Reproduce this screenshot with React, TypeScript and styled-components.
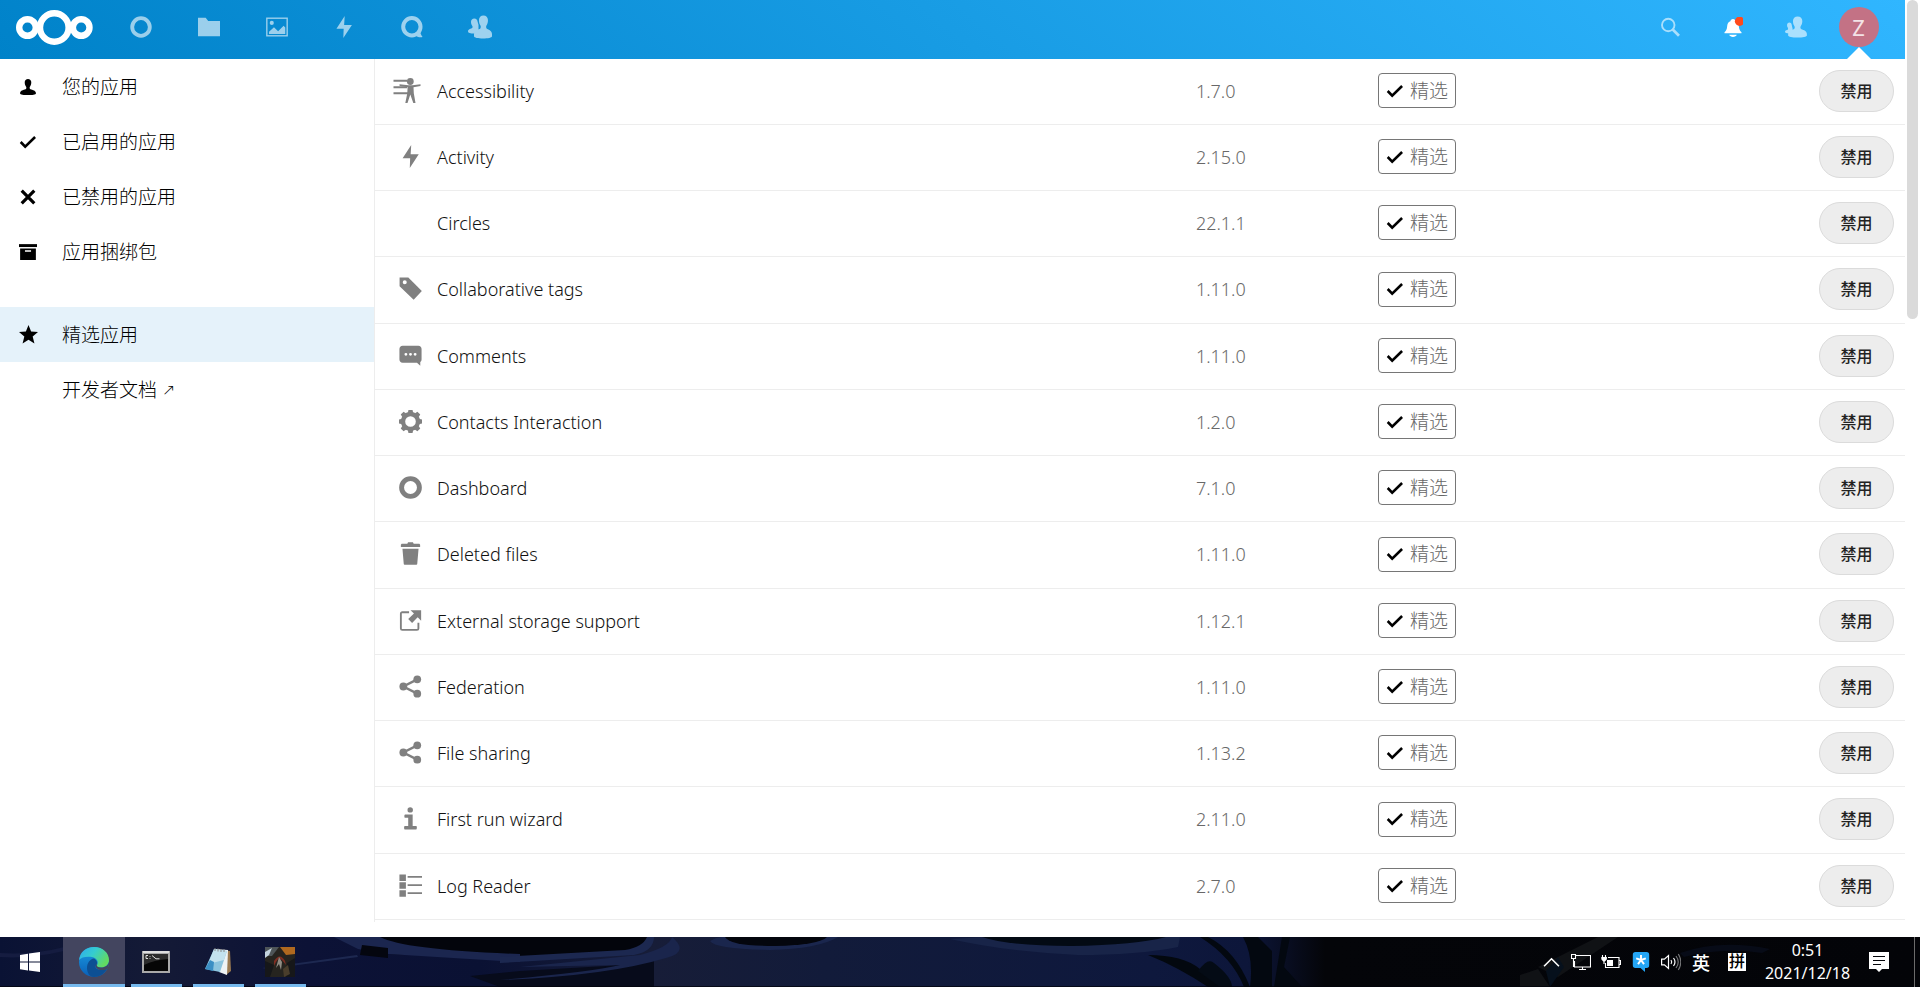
import React from "react";
import styled, { createGlobalStyle } from "styled-components";

const GlobalStyle = createGlobalStyle`
  *, *::before, *::after { box-sizing: border-box; }
  body {
    margin: 0;
    background: #fff;
    color: #111;
    font-family: "Noto Sans", "Noto Sans CJK SC", sans-serif;
    font-size: 18px;
    font-weight: 350;
  }
  a { color: inherit; text-decoration: none; }
  button { font: inherit; color: inherit; cursor: pointer; }
  svg { display: block; }
`;

const Screen = styled.div`
  display: flex;
  flex-direction: column;
  height: 100vh;
  overflow: hidden;
`;

const Browser = styled.div`
  display: flex;
  flex: 1;
  min-height: 0;
`;

const Page = styled.div`
  display: flex;
  flex: 1;
  flex-direction: column;
  min-width: 0;
  padding-bottom: 15px;
`;

const ScrollTrack = styled.div`
  flex: none;
  width: 15px;
  padding: 0 2px;
`;

const ScrollThumb = styled.div`
  height: 34%;
  border-radius: 6px;
  background: #dadada;
`;

/* ---------- header ---------- */

const Header = styled.header`
  display: flex;
  flex: none;
  align-items: center;
  height: 59px;
  padding: 0 15px;
  background: linear-gradient(40deg, #0082c9 0%, #30b6ff 100%);
  color: #fff;
`;

const Logo = styled.a`
  flex: none;
  width: 92px;
  padding-bottom: 2px;
`;

const AppMenu = styled.nav`
  display: grid;
  grid-template-columns: repeat(6, 1fr);
  width: 407px;
  height: 100%;
`;

const HeaderActions = styled.div`
  display: flex;
  height: 100%;
  margin-left: auto;
`;

const headerEntry = `
  display: flex;
  align-items: center;
  justify-content: center;
  height: 100%;
  padding: 0 0 5px;
`;

const AppLink = styled.a`
  ${headerEntry}
  svg { opacity: 0.6; }
`;

const HeaderButton = styled.button<{ $active?: boolean }>`
  ${headerEntry}
  position: relative;
  width: 63px;
  border: 0;
  background: none;
  color: #fff;
  > svg { opacity: ${(p) => (p.$active ? 1 : 0.6)}; }
`;

const Avatar = styled.span`
  width: 40px;
  height: 40px;
  border-radius: 50%;
  background: #c37285;
  color: #f3e3e7;
  font-size: 22px;
  font-weight: 400;
  line-height: 40px;
  text-align: center;
`;

const MenuArrow = styled.span`
  position: absolute;
  bottom: 0;
  left: 50%;
  margin-left: -12px;
  border: 12px solid transparent;
  border-top-width: 0;
  border-bottom-color: #fff;
`;

/* ---------- content ---------- */

const Content = styled.div`
  display: flex;
  flex: 1;
  min-height: 0;
`;

const Sidebar = styled.nav`
  flex: none;
  width: 375px;
  border-right: 1px solid #ededed;
`;

const SideList = styled.ul`
  margin: 0 0 28px;
  padding: 0;
  list-style: none;
`;

const SideLink = styled.a<{ $active?: boolean }>`
  display: flex;
  align-items: center;
  height: 55px;
  background: ${(p) => (p.$active ? "#e5f2fa" : "none")};
  color: #000;
  font-size: 19px;
  font-weight: 300;
  line-height: 24px;
`;

const SideIcon = styled.span`
  display: flex;
  flex: none;
  justify-content: center;
  width: 62px;
  padding-right: 6px;
  color: #000;
`;

const OutArrow = styled.span`
  padding-left: 5px;
  font-family: "DejaVu Sans", sans-serif;
  font-size: 16px;
`;

const Main = styled.main`
  flex: 1;
  min-width: 0;
  overflow: hidden;
`;

const AppTable = styled.table`
  width: 100%;
  border-spacing: 0;
  table-layout: fixed;
`;

const IconCol = styled.col`
  width: 62px;
`;

const NameCol = styled.col`
  width: 49.6%;
`;

const VersionCol = styled.col`
  width: 11.9%;
`;

const AppRow = styled.tr`
  height: 66px;
  &:nth-child(4n) { height: 67px; }
`;

const Cell = styled.td`
  padding: 0 0 2px;
  border-bottom: 1px solid #ededed;
  line-height: 24px;
  vertical-align: middle;
`;

const IconCell = styled(Cell)`
  padding: 0 0 3px 9px;
  color: #808080;
  svg { margin: 0 auto; }
`;

const VersionCell = styled(Cell)`
  color: #686868;
`;

const ActionCell = styled(Cell)`
  padding-right: 11px;
  text-align: right;
`;

const Badge = styled.span`
  display: inline-flex;
  align-items: center;
  gap: 6px;
  height: 35px;
  padding: 0 7px;
  border: 1px solid #767676;
  border-radius: 4px;
  color: #666;
  font-size: 19px;
  font-weight: 300;
  vertical-align: middle;
  svg { color: #000; }
`;

const DisableButton = styled.button`
  width: 75px;
  height: 42px;
  padding: 0;
  border: 1px solid #dbdbdb;
  border-radius: 21px;
  background: #ededed;
  color: #222;
  font-size: 16px;
  font-weight: 500;
  vertical-align: middle;
`;

/* ---------- taskbar ---------- */

const Taskbar = styled.footer`
  position: relative;
  display: flex;
  flex: none;
  height: 50px;
  overflow: hidden;
  background: #04050b;
  color: #fff;
`;

const Wallpaper = styled.svg`
  position: absolute;
  inset: 0;
  width: 100%;
  height: 100%;
`;

const TaskGroup = styled.div`
  position: relative;
  display: flex;
  height: 100%;
`;

const TrayGroup = styled(TaskGroup)`
  margin-left: auto;
`;

const taskButton = `
  display: flex;
  align-items: center;
  justify-content: center;
  height: 100%;
  padding: 0;
  border: 0;
  background: none;
  color: #fff;
`;

const StartButton = styled.button`
  ${taskButton}
  width: 63px;
  padding-right: 3px;
`;

const TaskButton = styled.button<{ $active?: boolean }>`
  ${taskButton}
  width: 62px;
  ${(p) => (p.$active ? "background: #43455f;" : "")}
  background-image: linear-gradient(#76b9ed, #76b9ed);
  background-repeat: no-repeat;
  background-position: bottom;
  background-size: ${(p) => (p.$active ? 62 : 51)}px 3px;
`;

const TrayButton = styled.button`
  ${taskButton}
  width: 30px;
`;

const ImeButton = styled.button`
  ${taskButton}
  width: 30px;
  margin-right: 6px;
  font-size: 18px;
  font-weight: 500;
`;

const PinyinTile = styled.span`
  width: 18px;
  height: 18px;
  background: #fff;
  color: #000;
  font-size: 16px;
  line-height: 17px;
`;

const Clock = styled.time`
  width: 101px;
  padding: 2px 2px 0 0;
  font-size: 16px;
  font-weight: 400;
  line-height: 23px;
  text-align: center;
`;

const NoticeButton = styled.button`
  ${taskButton}
  width: 56px;
  margin-right: 5px;
  padding-right: 16px;
  border-right: 1px solid #6b6b6b;
`;

/* ---------- drawings ---------- */

const USER =
  "M8 .8C6.3.8 5.1 2 5.1 3.6c0 1.5.2 2.4.8 3.5.3.5.6.7.6 1.200.1.7 0 1-.3 1.500C5.600 10.500 1 10.700 1 13.200v.8c0 .8 3.200 1.200 7 1.200s7-.4 7-1.200v-.8c0-2.500-4.600-2.700-5.200-3.400-.3-.5-.4-.8-.3-1.500 0-.5.300-.7.6-1.200.600-1.100.8-2 .8-3.500C10.900 2 9.700.8 8 .8z";

type Art = { box?: string; body: React.ReactNode };

const art: Record<string, Art> = {
  ring: { body: <circle cx="8" cy="8" r="6.200" fill="none" stroke="currentColor" strokeWidth="3.400" /> },
  ringThin: { body: <circle cx="8" cy="8" r="6.400" fill="none" stroke="currentColor" strokeWidth="2.800" /> },
  folder: { body: <path d="M0 1.200h5.600L7.400 3.600H16V14.800H0z" /> },
  picture: {
    body: (
      <>
        <rect x=".6" y="1.600" width="14.800" height="12.800" fill="none" stroke="currentColor" strokeWidth="1" />
        <circle cx="4.200" cy="5" r="1.500" />
        <path d="M2.200 13v-1.600L5.800 8.200l3 2.800 4-4 1.200 1.400V13z" />
      </>
    ),
  },
  bolt: { box: "0 0 32 32", body: <path d="M17 0 5 18.500h10.500L15 32 27.500 13H16.200z" /> },
  talk: {
    body: (
      <>
        <circle cx="7.900" cy="7.800" r="6.300" fill="none" stroke="currentColor" strokeWidth="2.900" />
        <path d="M10 13.800l3.800-3c.2 2.200 1 3.300 1.900 4.500-1.900.6-3.900 0-5.700-1.500z" />
      </>
    ),
  },
  contacts: {
    body: (
      <>
        <path d="M4.200 2.300C2.900 2.300 2 3.200 2 4.500c0 1.300.3 2 .8 2.700.3.500.3 1.100 0 1.500C2.200 9.300 0 9.200 0 11c0 .9 1.500 1.400 4 1.400L7 10V6.500L6.400 4.500C6.400 3.200 5.500 2.300 4.200 2.300z" />
        <path d="M10.300.3C8.500.3 7.300 1.500 7.300 3.400c0 1.600.3 2.600.9 3.500.4.600.4 1.500 0 2.100C7.300 9.800 4 10.200 4 12.700v1.400c0 .9 2.700 1.500 6 1.500s6-.6 6-1.500v-1.400c0-2.500-2.700-2.900-3.600-3.700-.4-.6-.4-1.500 0-2.100.6-.9.9-1.900.9-3.500C13.300 1.500 12.100.3 10.300.3z" />
      </>
    ),
  },
  contactsMenu: {
    body: (
      <>
        <path d="M3.200 4.800C2.200 4.800 1.500 5.500 1.500 6.500c0 1 .3 1.500.6 2 .2.500.2.900 0 1.300C1.600 10.300 0 10.300 0 11.500c0 .8 1.200 1.200 3 1.200L5.500 11V9L4.900 6.500C4.900 5.500 4.200 4.800 3.200 4.800z" />
        <path d="M9.200.3C7.100.3 5.800 1.600 5.800 3.600c0 1.700.4 2.700 1 3.600.4.600.4 1.400 0 2C5.900 10 2.300 10.300 2.300 12.900v1.200c0 .9 3 1.500 6.800 1.500s6.800-.6 6.800-1.500v-1.200c0-2.600-3.500-2.900-4.400-3.700-.4-.6-.4-1.400 0-2 .6-.9 1.100-1.900 1.100-3.600C12.600 1.600 11.300.3 9.200.3z" />
      </>
    ),
  },
  search: {
    body: (
      <g fill="none" stroke="currentColor">
        <circle cx="6.600" cy="6.400" r="5" strokeWidth="1.500" />
        <path d="M10.200 10l5 5" strokeWidth="2.200" />
      </g>
    ),
  },
  bell: {
    body: (
      <>
        <path d="M8 1.500C6.800 1.500 6 2.400 5.900 3.300 4 4 3.500 5.500 3.300 7.500 3.100 9.500 2.800 10.500 1.200 12.200V13h13.600v-.8C13.200 10.500 12.900 9.500 12.700 7.500 12.500 5.500 12 4 10.100 3.300 10 2.400 9.200 1.500 8 1.500zM5 14.200h6c-.3 1-1.500 1.800-3 1.800s-2.700-.8-3-1.800z" />
        <circle cx="13.300" cy="3.400" r="3.800" fill="#ff4a1c" />
      </>
    ),
  },
  user: { body: <path d={USER} /> },
  check: { body: <path d="M1.500 8l4 4.100L14.300 3.600" fill="none" stroke="currentColor" strokeWidth="2.300" /> },
  cross: { body: <path d="M1.700 1.700l12.600 12.600M14.300 1.700L1.700 14.300" fill="none" stroke="currentColor" strokeWidth="3.200" /> },
  archive: {
    body: (
      <>
        <path d="M0 1h16v2.600H0z" />
        <path fillRule="evenodd" d="M1 4.800h14V15H1zM5.300 6.500v1.300h5.400V6.500z" />
      </>
    ),
  },
  star: { body: <path d="M8 0l2.200 5.500 5.800.4-4.500 3.800 1.500 5.900L8 12.400l-5 3.200 1.500-5.900L0 5.900l5.800-.4z" /> },
  accessibility: {
    box: "0 0 28 25",
    body: (
      <>
        <path d="M.5 1.800H14v2H.5zM.5 8.300H14v2H.5zM.5 14.300H16v2H.5z" />
        <circle cx="17.300" cy="3.500" r="3.400" />
        <path d="M6.500 6.300l9 1h4l8-1v1.600l-7 1.400.3 6L22.500 25h-2.200l-3-8.500L14.500 25h-2.200l2-9.700.3-6-8-1.400z" />
      </>
    ),
  },
  tag: { body: <path fillRule="evenodd" d="M.4.3H6.500L15.900 9.700 10.200 15.900.4 6.500zM4 2.300a1.400 1.400 0 1 0 0 2.800 1.400 1.400 0 0 0 0-2.800z" /> },
  comment: {
    body: (
      <path
        fillRule="evenodd"
        d="M2.500 1.200h11c1.300 0 2.200.9 2.200 2.200v7.200c0 .9-.3 1.500-.9 1.900v2.700L12.500 13h-10C1.200 13 .3 12 .3 10.700V3.400C.3 2.100 1.200 1.200 2.500 1.200zM4.800 6.200a1 1 0 1 0 0 2 1 1 0 0 0 0-2zM8 6.200a1 1 0 1 0 0 2 1 1 0 0 0 0-2zM11.200 6.200a1 1 0 1 0 0 2 1 1 0 0 0 0-2z"
      />
    ),
  },
  gear: {
    body: (
      <>
        <circle cx="8" cy="8" r="5.200" fill="none" stroke="currentColor" strokeWidth="3" />
        <g>
          {[0, 45, 90, 135, 180, 225, 270, 315].map((a) => (
            <path key={a} d="M6.600-.2h2.800l.5 2.500H6.100z" transform={`rotate(${a} 8 8)`} />
          ))}
        </g>
      </>
    ),
  },
  trash: {
    body: (
      <>
        <path d="M6.300.2h3.400l.5 1h3.600c.5 0 .9.4.9.900V3.500H1.300V2.100c0-.5.4-.9.900-.9h3.600z" />
        <path d="M2.400 4.700h11.200L12.700 15.200c0 .4-.4.7-.8.7H4.100c-.4 0-.8-.3-.8-.7z" />
      </>
    ),
  },
  external: {
    body: (
      <>
        <path d="M7 2.300H2.300c-.6 0-1 .4-1 1v10.200c0 .6.4 1 1 1h10.200c.6 0 1-.4 1-1V9.500" fill="none" stroke="currentColor" strokeWidth="1.300" />
        <path d="M8 .8h7.400v7.400L13 5.800 9.100 9.700 6.400 7 10.400 3.200z" />
      </>
    ),
  },
  share: {
    body: (
      <>
        <path d="M12.700 3L3 8l9.700 5" fill="none" stroke="currentColor" strokeWidth="1.700" />
        <circle cx="3" cy="8" r="2.700" />
        <circle cx="12.700" cy="3" r="2.700" />
        <circle cx="12.700" cy="13" r="2.700" />
      </>
    ),
  },
  info: {
    body: (
      <>
        <circle cx="7.800" cy="2" r="1.900" />
        <path d="M4.200 5.200h5.300v8.100H12c.6 0 .6 2.300 0 2.300H4c-.6 0-.6-2.300 0-2.300h2.400V7.500H4.200c-.6 0-.6-2.300 0-2.300z" />
      </>
    ),
  },
  list: {
    body: (
      <path d="M.3.3h4.500v4.500H.3zM.3 5.800h4.500v4.400H.3zM.3 11.300h4.500v4.500H.3zM6 1.400h10v1.200H6zM6 7.100h10v1.200H6zM6 12.700h10v1.200H6z" />
    ),
  },
  start: { body: <path d="M0 2.300L6.400 1.300V7.600H0zM7.200 1.200L16 0V7.600H7.200zM0 8.300H6.400V14.700L0 13.800zM7.200 8.300H16V16L7.200 14.800z" /> },
  chevron: { body: <path d="M1 11.500l7-7 7 7" fill="none" stroke="currentColor" strokeWidth="1.500" /> },
  monitor: {
    box: "0 0 20 20",
    body: (
      <path d="M5 3.500h14.500v11.500H3.500V9M.5 2.500h4v4h-4zM2.500 6.500V15M11.500 15v2.500M8 17.500h7" fill="none" stroke="currentColor" strokeWidth="1.100" />
    ),
  },
  battery: {
    box: "0 0 20 20",
    body: (
      <>
        <path d="M7 5.500h11v10H4.500V11M18.500 8.500h1v4h-1M1.500 3v2.500M4.500 3v2.500M3 9v3" fill="none" stroke="currentColor" strokeWidth="1.100" />
        <path d="M.3 5h5.600v2.200L4 9.500H2.200L.3 7.200zM6 8h6v6H6z" />
      </>
    ),
  },
  bubbleStar: {
    box: "0 0 20 20",
    body: (
      <>
        <path d="M4.500 0h11C17.400 0 18.200.8 18.200 2.700v10.600c0 1.900-.8 2.700-2.700 2.700H14v4l-4.500-4h-5c-1.900 0-2.700-.8-2.700-2.700V2.700C1.800.8 2.600 0 4.500 0z" fill="#24a6f5" />
        <path d="M10 8V3M10 8L5.200 6.400M10 8l4.800-1.600M10 8l-3 4.100M10 8l3 4.100" stroke="#fff" strokeWidth="2" />
      </>
    ),
  },
  speaker: {
    box: "0 0 20 20",
    body: (
      <g fill="none" stroke="currentColor" strokeWidth="1.200">
        <path d="M.6 7.200h2.800L7.500 3.500v13L3.400 12.800H.6z" />
        <path d="M10 8q1.500 2 0 4M12.500 6q3 4 0 8" />
        <path d="M15 4q4.500 6 0 12M17.300 2q5 8 0 16" opacity=".45" />
      </g>
    ),
  },
  notice: {
    box: "0 0 20 20",
    body: (
      <>
        <path d="M0 0h20v17h-7l-3 3-3-3H0z" />
        <path d="M4 4.500h12M4 8.500h12M4 12.500h8" stroke="#05060b" strokeWidth="1.200" />
      </>
    ),
  },
};

const Icon = ({ name, size = 22, height }: { name: string; size?: number; height?: number }) => (
  <svg width={size} height={height ?? size} viewBox={art[name].box ?? "0 0 16 16"} fill="currentColor" aria-hidden="true">
    {art[name].body}
  </svg>
);

const NextcloudLogo = () => (
  <svg width="79" height="37" viewBox="0 0 79 37" fill="none" stroke="#fff" aria-hidden="true">
    <circle cx="39.300" cy="17.500" r="14.300" strokeWidth="6.400" />
    <circle cx="12.500" cy="17.500" r="8.300" strokeWidth="6.400" />
    <circle cx="66.200" cy="17.500" r="8.300" strokeWidth="6.400" />
  </svg>
);

const EdgeIcon = () => (
  <svg width="30" height="30" viewBox="0 0 30 30" aria-hidden="true">
    <defs>
      <linearGradient id="edgeTop" x1="0" y1="0" x2="1" y2="0.500">
        <stop offset="0" stopColor="#2fa8f0" />
        <stop offset=".5" stopColor="#35ccd0" />
        <stop offset="1" stopColor="#62d962" />
      </linearGradient>
      <linearGradient id="edgeSide" x1="0" y1="0" x2="0" y2="1">
        <stop offset="0" stopColor="#1b9de2" />
        <stop offset="1" stopColor="#0a5fb8" />
      </linearGradient>
    </defs>
    <circle cx="15" cy="15" r="15" fill="url(#edgeSide)" />
    <path d="M0 13C1 5 7 0 15 0c9 0 15 6 15 13 0 5-4 7.500-8 7.500-3 0-4.500-1-4-2.300C20 15 18 11 13 10 8 9 2 10 0 13z" fill="url(#edgeTop)" />
    <path d="M8 21c0-5 3-9 7-9.500 2 1 3.500 3 3 5-.5 1-1.500 2-1.500 3.500 0 2.500 5 4 11.500 2-3 5-8 8-13 8-4 0-7-4-7-9z" fill="#0d4f93" />
    <path d="M17.500 16c-2 3-.5 6.500 4 7 3 .3 5-.2 7.200-1.200L30 17v-2c-1 4-4.500 5.500-8 5.500-3.500 0-5-1.500-4.500-4.500z" fill="#43455f" />
  </svg>
);

const TerminalIcon = () => (
  <svg width="30" height="24" viewBox="0 0 30 24" aria-hidden="true">
    <rect x="1" y="1" width="28" height="22" fill="#a9a9a9" />
    <rect x="2" y="1" width="26" height="2" fill="#dedede" />
    <rect x="3" y="4" width="24" height="17" fill="#060606" />
    <path d="M3 4h24v5q-14 1-24 6z" fill="#2c2c2c" />
    <path d="M7 5.500H5v3h2M9 6v.8M9 8v.8M11 5.500l4 3.300h3.500" fill="none" stroke="#ddd" strokeWidth="1" />
  </svg>
);

const NotepadIcon = () => (
  <svg width="30" height="30" viewBox="0 0 30 30" aria-hidden="true">
    <path d="M12 2l15 2 1 20-5 4z" fill="#9a7a52" />
    <path d="M11 2l14 1-1 25-8-3z" fill="#eef3f5" />
    <path d="M11 2l13 2-7 21-15-3z" fill="#8cc4de" />
    <path d="M11 2l13 2-3 9L5 17z" fill="#c3e2ee" />
    <path d="M2 22l5-9 4 2-1 9z" fill="#3b8fc4" />
    <path d="M12 1v3M15 1.500v3M18 2v3M21 2v3" stroke="#888" />
  </svg>
);

const GameIcon = () => (
  <svg width="30" height="30" viewBox="0 0 30 30" aria-hidden="true">
    <rect width="30" height="30" fill="#26241f" />
    <path d="M15 0h15v7l-9 1z" fill="#b0691f" />
    <path d="M0 0h14L7 9H0z" fill="#4e5558" />
    <path d="M0 5l7-4-3 7-4 3z" fill="#c4d4de" />
    <path d="M9 14q6-9 11 0l1 4-4-5-3-2-3 4-2 4z" fill="#7d2d22" />
    <path d="M14 10l3 5-1 8-2-6-3 4z" fill="#918c84" />
    <path d="M0 14l9 4-4 12H0zM22 16l8-5v19h-9z" fill="#161719" />
    <path d="M18 22l5-4 2 9-6 3z" fill="#4a3e2c" />
  </svg>
);

const TaskbarBackdrop = () => (
  <Wallpaper viewBox="0 0 1920 50" preserveAspectRatio="none" aria-hidden="true">
    <defs>
      <linearGradient id="night" gradientUnits="userSpaceOnUse" x1="0" y1="0" x2="1920" y2="0">
        <stop offset="0" stopColor="#0a1234" />
        <stop offset=".08" stopColor="#141a36" />
        <stop offset=".16" stopColor="#0c1236" />
        <stop offset=".25" stopColor="#0a1133" />
        <stop offset=".34" stopColor="#171d38" />
        <stop offset=".43" stopColor="#121b3a" />
        <stop offset=".6" stopColor="#0e183d" />
        <stop offset=".65" stopColor="#0d163a" />
        <stop offset=".69" stopColor="#040509" />
        <stop offset="1" stopColor="#030408" />
      </linearGradient>
    </defs>
    <rect width="1920" height="50" fill="url(#night)" />
    <path d="M0 16q35 2 64-6v4Q30 22 0 20z" fill="#151c40" />
    <path d="M470 39l50-5 120-7 14-5v28H500z" fill="#070b1b" />
    <path d="M262 31l95-13 1 2-90 12z" fill="#1d2850" />
    <path d="M372 0h278l-8 14-120 8-134-5z" fill="#03050c" />
    <path d="M334 0h46q25 13 140 17v8l-132-8-30-5z" fill="#1b264f" />
    <path d="M362 8l26 3v10l-28-3z" fill="#04060f" />
    <path d="M500 20l125-7q18-3 22-13h7q0 14-20 18l-134 8z" fill="#1c2850" />
    <path d="M520 30l120-12q30-8 32-18 18 15-6 21-60 18-166 22 90-8 120-15z" fill="#1a254c" />
    <path d="M710 4q8-5 18-4h110q-20 12-68 13-55-1-60-9z" fill="#1a264d" />
    <path d="M725 0h102q-8 8-52 9-45 0-50-9z" fill="#04060d" />
    <path d="M950 2l35-2h195l-2 10q-40 8-100 8-70-3-128-16z" fill="#182448" />
    <path d="M982 0h184q-30 8-95 9-62 0-89-9z" fill="#030a14" />
    <path d="M1148 18q35 0 52 14l14 12 16 6h-22q-30-20-60-32z" fill="#03080f" />
    <path d="M1200 0h8q28 14 42 50h-6q-12-30-44-50zM1243 0h15l14 14v36h-22q4-30-7-50zM1282 0h8l-6 30 18 20h-28z" fill="#030810" />
    <path d="M1198 34q10-14 16-8 18 14 18 24h-12z" fill="#040b15" />
    <path d="M1538 30l60-30h20l-60 40zM1520 38l18-6 12 18h-30z" fill="#101215" />
    <path d="M1546 34l12-14 6 10-14 20z" fill="#06101c" />
    <path d="M1680 16q40-14 90-4l-8 4q-40-6-78 4z" fill="#070b17" />
    <rect y="49" width="1920" height="1" fill="#02030a" opacity=".7" />
  </Wallpaper>
);

/* ---------- data ---------- */

const menuApps = [
  ["ringThin", "仪表盘"],
  ["folder", "文件"],
  ["picture", "照片"],
  ["bolt", "动态"],
  ["talk", "通话"],
  ["contacts", "联系人"],
];

const sections = [
  { icon: "user", label: "您的应用" },
  { icon: "check", label: "已启用的应用" },
  { icon: "cross", label: "已禁用的应用" },
  { icon: "archive", label: "应用捆绑包" },
];

const apps = [
  { name: "Accessibility", version: "1.7.0", icon: "accessibility" },
  { name: "Activity", version: "2.15.0", icon: "bolt" },
  { name: "Circles", version: "22.1.1", icon: "" },
  { name: "Collaborative tags", version: "1.11.0", icon: "tag" },
  { name: "Comments", version: "1.11.0", icon: "comment" },
  { name: "Contacts Interaction", version: "1.2.0", icon: "gear" },
  { name: "Dashboard", version: "7.1.0", icon: "ring" },
  { name: "Deleted files", version: "1.11.0", icon: "trash" },
  { name: "External storage support", version: "1.12.1", icon: "external" },
  { name: "Federation", version: "1.11.0", icon: "share" },
  { name: "File sharing", version: "1.13.2", icon: "share" },
  { name: "First run wizard", version: "2.11.0", icon: "info" },
  { name: "Log Reader", version: "2.7.0", icon: "list" },
];

/* The accessibility drawing is wider to the left, so its box carries blank space on the right. */
const WideIcon = styled.span`
  display: block;
  padding-right: 7px;
`;

const AppIcon = ({ name }: { name: string }) => {
  if (!name) return null;
  return name === "accessibility" ? (
    <WideIcon>
      <Icon name={name} size={28} height={25} />
    </WideIcon>
  ) : (
    <Icon name={name} size={23} />
  );
};

export default function App() {
  return (
    <Screen>
      <GlobalStyle />
      <Browser>
        <Page>
          <Header>
            <Logo href="#" aria-label="Nextcloud">
              <NextcloudLogo />
            </Logo>
            <AppMenu>
              {menuApps.map(([icon, label]) => (
                <AppLink key={icon} href="#" aria-label={label}>
                  <Icon name={icon} size={icon === "contacts" ? 24 : 22} />
                </AppLink>
              ))}
            </AppMenu>
            <HeaderActions>
              <HeaderButton aria-label="搜索">
                <Icon name="search" size={20} />
              </HeaderButton>
              <HeaderButton aria-label="通知" $active>
                <Icon name="bell" size={20} />
              </HeaderButton>
              <HeaderButton aria-label="联系人">
                <Icon name="contactsMenu" size={22} />
              </HeaderButton>
              <HeaderButton aria-label="设置" $active>
                <Avatar>Z</Avatar>
                <MenuArrow />
              </HeaderButton>
            </HeaderActions>
          </Header>
          <Content>
            <Sidebar>
              <SideList>
                {sections.map((s) => (
                  <li key={s.label}>
                    <SideLink href="#">
                      <SideIcon>
                        <Icon name={s.icon} size={s.icon === "cross" ? 16 : 18} />
                      </SideIcon>
                      {s.label}
                    </SideLink>
                  </li>
                ))}
              </SideList>
              <SideList>
                <li>
                  <SideLink href="#" $active>
                    <SideIcon>
                      <Icon name="star" size={19} />
                    </SideIcon>
                    精选应用
                  </SideLink>
                </li>
                <li>
                  <SideLink href="#">
                    <SideIcon />
                    开发者文档<OutArrow>↗</OutArrow>
                  </SideLink>
                </li>
              </SideList>
            </Sidebar>
            <Main>
              <AppTable>
                <colgroup>
                  <IconCol />
                  <NameCol />
                  <VersionCol />
                  <col />
                  <col />
                </colgroup>
                <tbody>
                  {apps.map((app) => (
                    <AppRow key={app.name}>
                      <IconCell>
                        <AppIcon name={app.icon} />
                      </IconCell>
                      <Cell>{app.name}</Cell>
                      <VersionCell>{app.version}</VersionCell>
                      <Cell>
                        <Badge>
                          <Icon name="check" size={18} />
                          精选
                        </Badge>
                      </Cell>
                      <ActionCell>
                        <DisableButton>禁用</DisableButton>
                      </ActionCell>
                    </AppRow>
                  ))}
                </tbody>
              </AppTable>
            </Main>
          </Content>
        </Page>
        <ScrollTrack>
          <ScrollThumb />
        </ScrollTrack>
      </Browser>
      <Taskbar>
        <TaskbarBackdrop />
        <TaskGroup>
          <StartButton aria-label="开始">
            <Icon name="start" size={20} />
          </StartButton>
          <TaskButton aria-label="Edge" $active>
            <EdgeIcon />
          </TaskButton>
          <TaskButton aria-label="命令提示符">
            <TerminalIcon />
          </TaskButton>
          <TaskButton aria-label="记事本">
            <NotepadIcon />
          </TaskButton>
          <TaskButton aria-label="游戏">
            <GameIcon />
          </TaskButton>
        </TaskGroup>
        <TrayGroup>
          <TrayButton aria-label="显示隐藏的图标">
            <Icon name="chevron" size={17} />
          </TrayButton>
          <TrayButton aria-label="网络">
            <Icon name="monitor" size={20} />
          </TrayButton>
          <TrayButton aria-label="电池">
            <Icon name="battery" size={20} />
          </TrayButton>
          <TrayButton aria-label="消息">
            <Icon name="bubbleStar" size={20} />
          </TrayButton>
          <TrayButton aria-label="音量">
            <Icon name="speaker" size={20} />
          </TrayButton>
          <ImeButton>英</ImeButton>
          <ImeButton>
            <PinyinTile>拼</PinyinTile>
          </ImeButton>
          <Clock>
            0:51
            <br />
            2021/12/18
          </Clock>
          <NoticeButton aria-label="操作中心">
            <Icon name="notice" size={20} />
          </NoticeButton>
        </TrayGroup>
      </Taskbar>
    </Screen>
  );
}
